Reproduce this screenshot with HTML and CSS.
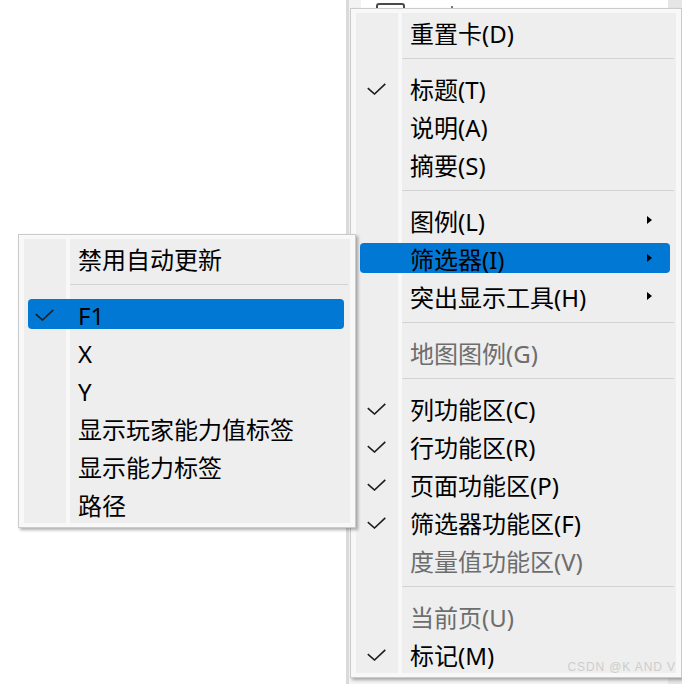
FILE: index.html
```html
<!DOCTYPE html>
<html lang="zh-CN">
<head>
<meta charset="utf-8">
<title>Menu</title>
<link rel="stylesheet" href="styles.css">
</head>
<body>
<div class="desk">
  <div class="pane-left"></div>
  <div class="divider"></div>
  <div class="pane-right">
    <div class="card"><span class="checkbox"></span><span class="dot"></span></div>
    <div class="scroll"></div>
  </div>
</div>

<div class="menu menu-main">
  <ul class="menu-body">
    <li class="item"><div class="row"><span class="gut"></span><span class="label">重置卡(D)</span></div></li>
    <li class="sep"></li>
    <li class="item checked"><div class="row"><span class="gut"><svg class="check" viewBox="0 0 19 12"><polyline points="0.8,5.2 7.5,11 18.3,0.8"/></svg></span><span class="label">标题(T)</span></div></li>
    <li class="item"><div class="row"><span class="gut"></span><span class="label">说明(A)</span></div></li>
    <li class="item"><div class="row"><span class="gut"></span><span class="label">摘要(S)</span></div></li>
    <li class="sep"></li>
    <li class="item"><div class="row"><span class="gut"></span><span class="label">图例(L)</span><svg class="arrow" viewBox="0 0 5 8"><polygon points="0,0 5,4 0,8"/></svg></div></li>
    <li class="item active"><div class="row"><span class="gut"></span><span class="label">筛选器(I)</span><svg class="arrow" viewBox="0 0 5 8"><polygon points="0,0 5,4 0,8"/></svg></div></li>
    <li class="item"><div class="row"><span class="gut"></span><span class="label">突出显示工具(H)</span><svg class="arrow" viewBox="0 0 5 8"><polygon points="0,0 5,4 0,8"/></svg></div></li>
    <li class="sep"></li>
    <li class="item disabled"><div class="row"><span class="gut"></span><span class="label">地图图例(G)</span></div></li>
    <li class="sep"></li>
    <li class="item"><div class="row"><span class="gut"><svg class="check" viewBox="0 0 19 12"><polyline points="0.8,5.2 7.5,11 18.3,0.8"/></svg></span><span class="label">列功能区(C)</span></div></li>
    <li class="item"><div class="row"><span class="gut"><svg class="check" viewBox="0 0 19 12"><polyline points="0.8,5.2 7.5,11 18.3,0.8"/></svg></span><span class="label">行功能区(R)</span></div></li>
    <li class="item"><div class="row"><span class="gut"><svg class="check" viewBox="0 0 19 12"><polyline points="0.8,5.2 7.5,11 18.3,0.8"/></svg></span><span class="label">页面功能区(P)</span></div></li>
    <li class="item"><div class="row"><span class="gut"><svg class="check" viewBox="0 0 19 12"><polyline points="0.8,5.2 7.5,11 18.3,0.8"/></svg></span><span class="label">筛选器功能区(F)</span></div></li>
    <li class="item disabled"><div class="row"><span class="gut"></span><span class="label">度量值功能区(V)</span></div></li>
    <li class="sep"></li>
    <li class="item disabled"><div class="row"><span class="gut"></span><span class="label">当前页(U)</span></div></li>
    <li class="item"><div class="row"><span class="gut"><svg class="check" viewBox="0 0 19 12"><polyline points="0.8,5.2 7.5,11 18.3,0.8"/></svg></span><span class="label">标记(M)</span></div></li>
  </ul>
  <div class="watermark">CSDN @K AND V</div>
</div>

<div class="menu menu-sub">
  <ul class="menu-body">
    <li class="item"><div class="row"><span class="gut"></span><span class="label">禁用自动更新</span></div></li>
    <li class="sep"></li>
    <li class="item active"><div class="row"><span class="gut"><svg class="check" viewBox="0 0 19 12"><polyline points="0.8,5.2 7.5,11 18.3,0.8"/></svg></span><span class="label">F1</span></div></li>
    <li class="item"><div class="row"><span class="gut"></span><span class="label">X</span></div></li>
    <li class="item"><div class="row"><span class="gut"></span><span class="label">Y</span></div></li>
    <li class="item"><div class="row"><span class="gut"></span><span class="label">显示玩家能力值标签</span></div></li>
    <li class="item"><div class="row"><span class="gut"></span><span class="label">显示能力标签</span></div></li>
    <li class="item"><div class="row"><span class="gut"></span><span class="label">路径</span></div></li>
  </ul>
</div>
</body>
</html>
```

FILE: styles.css
```css
* { box-sizing: border-box; }
html, body { margin: 0; padding: 0; }
body {
  width: 682px;
  height: 684px;
  overflow: hidden;
  position: relative;
  background: #ffffff;
  font-family: "Noto Sans", "Noto Sans CJK SC", sans-serif;
}

/* background application */
.desk {
  display: flex;
  height: 684px;
}
.pane-left { width: 346px; background: #ffffff; }
.divider { width: 3px; background: #dadada; }
.pane-right {
  flex: 1;
  display: flex;
  align-items: flex-start;
  background: #f3f3f3;
  padding-left: 12px;
}
.card {
  width: 307px;
  height: 40px;
  background: #ffffff;
  position: relative;
  padding: 3px 0 0 15px;
  display: flex;
  gap: 46px;
}
.checkbox {
  width: 29px;
  height: 24px;
  border: 2px solid #4a4a4a;
  border-radius: 3px;
}
.dot {
  width: 2px;
  height: 3px;
  margin-top: 3px;
  background: #777;
}
.scroll {
  flex: 1;
  height: 684px;
  background: #e6e6e6;
}

/* menus */
.menu {
  position: absolute;
  border: 1px solid #cbcbcb;
  background: #f8f8f8;
  padding: 4px 5px;
  box-shadow: 2px 2px 3px rgba(0, 0, 0, 0.32);
}
.menu-main { left: 350px; top: 8px; width: 332px; }
.menu-sub { left: 18px; top: 234px; width: 338px; }

.menu-body {
  list-style: none;
  margin: 0;
  padding: 0;
  background: linear-gradient(90deg, #eeeeee 0 42px, #f8f8f8 42px 46px, #eeeeee 46px);
}

.item {
  height: 38px;
  padding: 4px 6px 4px 4px;
}
.row {
  height: 30px;
  display: flex;
  align-items: center;
  border-radius: 4px;
  font-size: 24px;
  line-height: 30px;
  color: #000;
}
.item.active .row { background: #0078d4; }
.item.disabled .row { color: #6d6d6d; }

.gut {
  width: 50px;
  flex: none;
  display: flex;
  align-items: center;
  padding-left: 7px;
}
.check {
  width: 19px;
  height: 12px;
  fill: none;
  stroke: #1e1e1e;
  stroke-width: 1.6;
  margin-top: 2px;
}
.label {
  flex: 1;
  padding-top: 3px;
  white-space: nowrap;
}
.arrow {
  width: 5px;
  height: 8px;
  fill: #000;
  margin-right: 18px;
}

.sep {
  height: 18px;
  position: relative;
}
.sep::after {
  content: "";
  position: absolute;
  left: 46px;
  right: 2px;
  top: 7px;
  height: 1px;
  background: #d3d3d3;
}

.watermark {
  position: absolute;
  right: 5px;
  bottom: 3px;
  font-family: "Liberation Sans", sans-serif;
  font-size: 12px;
  letter-spacing: 0.9px;
  color: #cdcdcd;
}
```
